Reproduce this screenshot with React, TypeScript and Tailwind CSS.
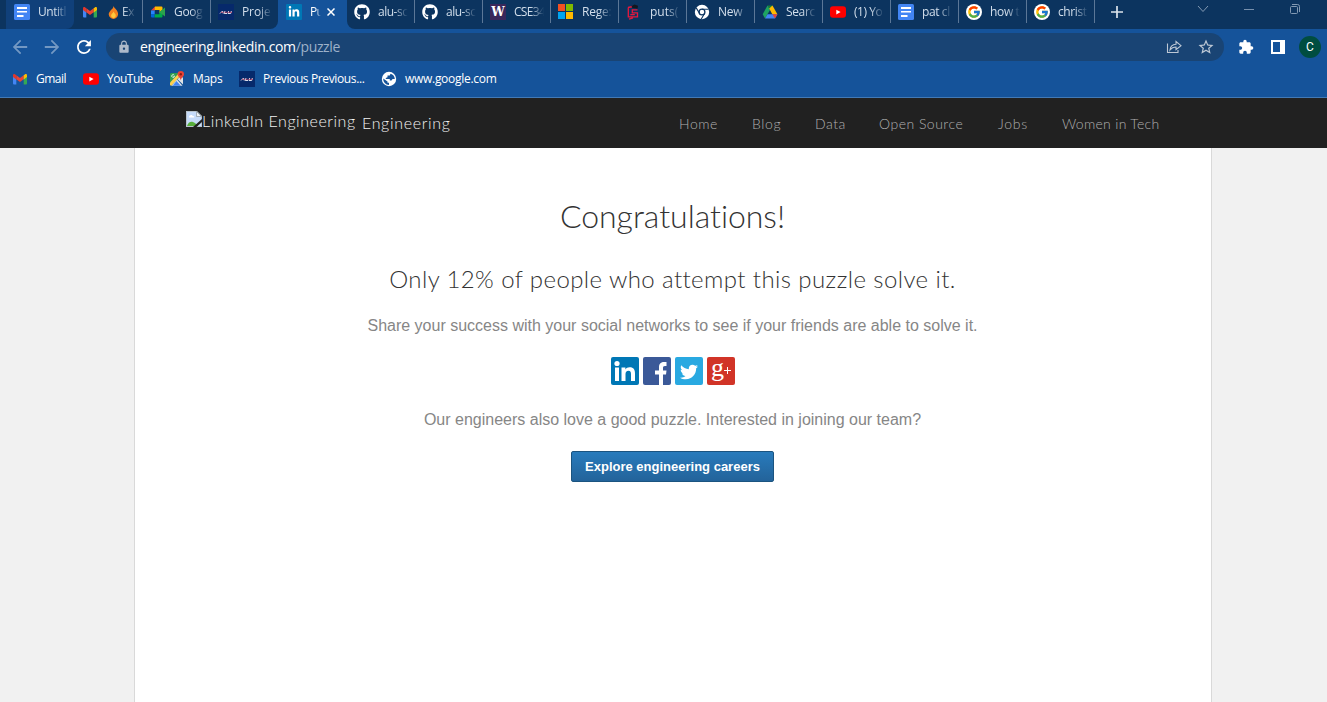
import React from "react";
import { FcGoogle } from "react-icons/fc";
import { FaGithub, FaTwitter, FaLinkedinIn } from "react-icons/fa";
import { MdArrowBack, MdArrowForward, MdRefresh, MdLock, MdStarOutline, MdExtension } from "react-icons/md";

const Docs = () => (
  <svg viewBox="0 0 16 16" className="size-4">
    <rect width="16" height="16" rx="1.5" fill="#4285f4" />
    <path d="M3 3h10v2H3zM3 7h10v1.500H3zM3 11h6.500v2H3z" fill="#fff" />
  </svg>
);

const Gmail = () => (
  <svg viewBox="0 0 16 16" className="size-4">
    <path d="M1 4.5 4.3 7v6.5H2a1 1 0 0 1-1-1z" fill="#4285f4" />
    <path d="M15 4.5 11.700 7v6.500H14a1 1 0 0 0 1-1z" fill="#34a853" />
    <path d="M4.300 4.300 8 7.100l3.700-2.800v4L8 11 4.300 8.300z" fill="#ea4335" />
    <path d="M11.700 4.300 12.800 3.400C13.800 2.600 15 3.200 15 4.400V6l-3.300 2.400z" fill="#fbbc04" />
    <path d="M4.300 4.300 3.200 3.400C2.200 2.600 1 3.200 1 4.400V6l3.300 2.400z" fill="#e0372c" />
  </svg>
);

const Meet = () => (
  <svg viewBox="0 0 16 16" className="size-4">
    <path d="M5 2.500 1 6.500h4z" fill="#ea4335" />
    <path d="M1 6.500h3.700v4H1z" fill="#2684fc" />
    <path d="M1 10.300h3.700v3.200H2a1 1 0 0 1-1-1z" fill="#0066da" />
    <path d="M5 2.500h6.500a1 1 0 0 1 1 1V8l-3 1V6H4.700z" fill="#ffba00" />
    <path d="M4.700 10.200h4.600V8l3.200-2.500v7a1 1 0 0 1-1 1H4.700z" fill="#00ac47" />
    <path d="M9.300 8.200 15 3.500v9z" fill="#2ba24c" />
  </svg>
);

const Alu = () => (
  <svg viewBox="0 0 16 16" className="size-4">
    <rect width="16" height="16" fill="#06296b" />
    <path d="M2 9.500 4.500 7l.7 2.500M7 7 6.200 9.500H9M10.600 7l-.6 2.500h2.700L13.400 7" fill="none" stroke="#dedeea" strokeWidth="1" />
    <path d="M3 8.300h2.500M6.500 8.300h3M10 8.300h4" stroke="#d3385c" strokeWidth=".7" />
  </svg>
);

const LinkedInMark = () => (
  <span className="flex size-4 items-center justify-center rounded-[1px] bg-[#0077b5]">
    <FaLinkedinIn className="size-3 text-white" />
  </span>
);

const YouTube = () => (
  <svg viewBox="0 0 16 16" className="size-4">
    <rect y="2.300" width="16" height="11.500" rx="3" fill="#f00" />
    <path d="m6.300 5.700 4.300 2.400-4.300 2.400z" fill="#fff" />
  </svg>
);

const Maps = () => (
  <svg viewBox="0 0 16 16" className="size-4">
    <path d="M1 3.500A1.500 1.500 0 0 1 2.500 2H10L1 11.500z" fill="#2e9d50" />
    <path d="M1 11.500 10 2l2 2-9.500 10.700A1.500 1.500 0 0 1 1 13.200z" fill="#ffd04b" />
    <path d="M2.500 14.700 8 8.500l5.500 6.200z" fill="#e4e8ea" />
    <path d="M3.500 14.700 7.500 10l4.300 4.700z" fill="#4285f4" />
    <path d="M8.500 8.300 11 5.800l3 .7v7z" fill="#dfe3e5" />
    <path d="M5.300 4.200a1.400 1.400 0 1 0 .2 1.100H4.300" stroke="#fff" fill="none" strokeWidth=".8" />
    <path d="M11.800 0a3.200 3.200 0 0 1 3.200 3.300c0 2.200-2.500 3-3.200 6-.7-3-3.200-3.800-3.200-6A3.200 3.200 0 0 1 11.800 0z" fill="#ea4335" />
    <circle cx="11.800" cy="3.200" r="1.200" fill="#8b1a14" />
  </svg>
);

const Washington = () => (
  <span className="flex size-4 items-center justify-center bg-[#39275b] font-['DejaVu_Serif',serif] text-[12px] leading-none font-bold text-white">W</span>
);

const Microsoft = () => (
  <svg viewBox="0 0 16 16" className="size-4">
    <path d="M0 0h7v7H0z" fill="#f25022" />
    <path d="M8 0h7v7H8z" fill="#7fba00" />
    <path d="M0 8h7v7H0z" fill="#00a4ef" />
    <path d="M8 8h7v7H8z" fill="#ffb900" />
  </svg>
);

const RubyBook = () => (
  <svg viewBox="0 0 16 16" className="size-4">
    <path d="M2 3.500 7 2.500M2.300 3.500v9.300h9.200V8.800H6.300V5.800h5.200M4.300 10.700h4.500M3 15.200l4-1.300" fill="none" stroke="#e8183f" strokeWidth="1.300" />
    <path d="M5.500 2 8.500.5l3.500 1.300-.5 3-2.200-.5-3-.3z" fill="#14161f" />
  </svg>
);

const Chrome = () => (
  <svg viewBox="0 0 16 16" className="size-4">
    <circle cx="8" cy="8" r="7.200" fill="#fff" />
    <circle cx="8" cy="8" r="2.900" fill="none" stroke="#0c345f" strokeWidth="1.300" />
    <path d="M8 5.200h6.600M5.600 9.500 2.200 3.900M10.500 9.400 7.300 15" stroke="#0c345f" strokeWidth="1.100" />
  </svg>
);

const Drive = () => (
  <svg viewBox="0 0 16 16" className="size-4">
    <path d="M5.500 1.500h5L8 6z" fill="#188038" />
    <path d="M5.500 1.500 8 6l-5 8.500L.7 10.200z" fill="#1ea362" />
    <path d="M10.500 1.500 15.400 10.200H10.300L7.200 4.600z" fill="#ffba00" />
    <path d="M5.500 10.200h9.900L13 14.500H3z" fill="#4285f4" />
    <path d="m15.400 10.200-2.400 4.300-2.600-4.300z" fill="#ea4335" />
  </svg>
);

const Google = () => (
  <span className="flex size-4 items-center justify-center rounded-full bg-white">
    <FcGoogle className="size-[14px]" />
  </span>
);

const Globe = () => (
  <svg viewBox="0 0 16 16" className="size-4">
    <circle cx="8" cy="8" r="7.200" fill="#fff" />
    <path d="M9.500 2.800 8.800 4.500H6.500v1.700L4.800 7v1h4v1.500h1.700l1-1.500h2.300A6 6 0 0 0 9.500 2.800z" fill="#15539a" />
    <path d="M2.200 7.500l4.300 3v1.300H8v2.200A6 6 0 0 1 2.200 7.500z" fill="#15539a" />
  </svg>
);

const Github = () => <FaGithub className="size-4 text-white" />;

const Fire = () => (
  <svg viewBox="0 0 12 14" className="h-[13px] w-[11px] shrink-0">
    <path d="M6 0C7 3 11.500 5 11 9.300 10.700 12 8.700 14 6 14S1 12 .8 9.300C.7 7 2 6 3 4.500 4.500 3.500 6 2 6 0z" fill="#f4811f" />
    <path d="M6 6c.6 1.700 2.500 2.300 2.500 4.400C8.500 12 7.400 13 6 13s-2.600-1-2.600-2.600C3.400 8.600 5.500 8 6 6z" fill="#ffc83d" />
  </svg>
);

type Tab = { icon: () => React.ReactElement; text: string; sep?: boolean; fire?: boolean; first?: boolean; track?: string };

const tabs: Tab[] = [
  { icon: Docs, text: "Untitl", first: true, track: "tracking-[-0.45px]" },
  { icon: Gmail, text: "Ex", fire: true, track: "tracking-[-0.5px]" },
  { icon: Meet, text: "Goog", sep: true, track: "tracking-[-0.3px]" },
  { icon: Alu, text: "Proje", sep: true, track: "tracking-[-0.1px]" },
];

const rightTabs: Tab[] = [
  { icon: Github, text: "alu-sc", track: "tracking-[-0.5px]" },
  { icon: Github, text: "alu-sc", sep: true, track: "tracking-[-0.5px]" },
  { icon: Washington, text: "CSE34", sep: true, track: "tracking-[-0.7px]" },
  { icon: Microsoft, text: "Rege:", sep: true, track: "tracking-[-0.2px]" },
  { icon: RubyBook, text: "puts(", sep: true, track: "tracking-[0px]" },
  { icon: Chrome, text: "New", sep: true, track: "tracking-[-0.2px]" },
  { icon: Drive, text: "Searc", sep: true, track: "tracking-[-0.35px]" },
  { icon: YouTube, text: "(1) Yo", sep: true, track: "tracking-[-0.45px]" },
  { icon: Docs, text: "pat cl", sep: true, track: "tracking-[-0.4px]" },
  { icon: Google, text: "how t", sep: true, track: "tracking-[-0.35px]" },
  { icon: Google, text: "christ", sep: true, track: "tracking-[-0.4px]" },
];

function BrowserTab({ tab }: { tab: Tab }) {
  const Icon = tab.icon;
  return (
    <div className={`flex h-full w-[68px] shrink-0 items-start pt-1 ${tab.first ? "rounded-br-lg bg-[#10407a]" : ""}`}>
      <span className={`-mt-1 h-[23px] w-px shrink-0 ${tab.sep ? "bg-[#5b7797]" : ""}`} />
      <span className="ml-[7px] size-4 shrink-0"><Icon /></span>
      <span className={`flex items-center gap-[3px] [mask-image:linear-gradient(to_right,#000_55%,transparent)] ${tab.fire ? "ml-[10px] w-[28px]" : "ml-2 w-[30px]"}`}>
        {tab.fire && <Fire />}
        <span className={`text-xs leading-4 whitespace-nowrap text-[#d3dfec] ${tab.track}`}>{tab.text}</span>
      </span>
    </div>
  );
}

const bookmarks = [
  { icon: Gmail, text: "Gmail", cls: "w-[71px]", track: "tracking-[-0.5px]" },
  { icon: YouTube, text: "YouTube", cls: "w-[86px]", track: "tracking-[-0.5px]" },
  { icon: Maps, text: "Maps", cls: "w-[70px]", track: "tracking-[-0.3px]" },
  { icon: Alu, text: "Previous Previous...", cls: "w-[142px]", track: "tracking-[-0.37px]" },
];

const links = [
  { t: "Home", c: "w-[73px]", k: "tracking-[0.55px]" },
  { t: "Blog", c: "w-[63px]", k: "tracking-[0.65px]" },
  { t: "Data", c: "w-[64px]", k: "tracking-[0.5px]" },
  { t: "Open Source", c: "w-[119px]", k: "tracking-[0.5px]" },
  { t: "Jobs", c: "w-[64px]", k: "tracking-[0.7px]" },
  { t: "Women in Tech", c: "w-[99px]", k: "tracking-[0.3px]" },
];

function Browser() {
  return (
    <header className="h-[98px] shrink-0 border-b border-[#4279b5] bg-[#15539a] font-['Open_Sans','Noto_Sans',sans-serif]">
      <div className="flex h-[29px] bg-[#15539a]">
        <div className="flex w-[278px] shrink-0 rounded-br-lg bg-[#0c345f] pl-[6px]">
          {tabs.map((t) => <BrowserTab key={t.text} tab={t} />)}
        </div>
        <div className="flex w-[69px] shrink-0 items-start bg-[#15539a] pt-1 pl-2">
          <LinkedInMark />
          <span className="ml-2 w-[11px] text-xs leading-4 tracking-[-0.7px] text-white [mask-image:linear-gradient(to_right,#000_55%,transparent)]">Pu</span>
          <svg viewBox="0 0 8 8" className="mt-1 ml-[6px] size-2"><path d="m.5.5 7 7m0-7-7 7" stroke="#fff" strokeWidth="1.500" /></svg>
        </div>
        <div className="flex flex-1 rounded-bl-lg bg-[#0c345f]">
          <div className="-ml-px flex">
            {rightTabs.map((t, i) => <BrowserTab key={i} tab={t} />)}
          </div>
          <span className="h-[23px] w-px bg-[#5b7797]" />
          <svg viewBox="0 0 12 12" className="mt-[6px] ml-4 size-3"><path d="M6 0v12M0 6h12" stroke="#dbe3ec" strokeWidth="1.700" /></svg>
          <svg viewBox="0 0 12 8" className="mt-[5px] ml-[74px] h-2 w-3"><path d="m1 1 5 5.500L11 1" fill="none" stroke="#8299b3" /></svg>
          <span className="mt-[9px] ml-[35px] h-px w-[10px] bg-[#7890ad]" />
          <svg viewBox="0 0 12 12" className="mt-[3px] ml-[35px] size-3">
            <rect x="1.500" y="3.500" width="7" height="7" rx="1" fill="none" stroke="#8299b3" />
            <path d="M3 1.500h5.500a2 2 0 0 1 2 2V9" fill="none" stroke="#8299b3" />
          </svg>
        </div>
      </div>
      <div className="flex h-9 items-center pl-3">
        <MdArrowBack className="mr-4 size-4 scale-[1.35] text-[#7398c3]" />
        <MdArrowForward className="mr-4 size-4 scale-[1.35] text-[#7398c3]" />
        <MdRefresh className="mr-[14px] size-4 scale-[1.3] text-white" />
        <div className="flex h-7 w-[1118px] items-center rounded-full bg-[#194474] pl-[11px]">
          <MdLock className="size-[14px] text-[#aebaca]" />
          <span className="ml-[9px] w-[205px] text-[14px] leading-5 tracking-[-0.36px] whitespace-nowrap text-white">
            engineering.linkedin.com<span className="text-[#9db1c9]">/puzzle</span>
          </span>
          <svg viewBox="0 0 16 16" className="ml-[821px] size-4">
            <path d="M1.500 4.500v9h10.500v-2.500M4 11c.4-4 2.700-5.600 6-5.700V2.500L15 6.700l-5 4V8C7.400 8 5.500 9 4 11z" fill="none" stroke="#bdc8d5" strokeWidth="1.100" />
          </svg>
          <MdStarOutline className="ml-[15px] size-[18px] text-[#bdc8d5]" />
        </div>
        <MdExtension className="ml-[14px] size-4 text-white" />
        <svg viewBox="0 0 14 14" className="ml-[17px] size-[14px]"><path d="M1 1h12v12H1z" fill="none" stroke="#fff" strokeWidth="2" /><path d="M9 0h5v14H9z" fill="#fff" /></svg>
        <span className="ml-[14px] flex size-[22px] items-center justify-center rounded-full bg-[#004d40] font-[Roboto,sans-serif] text-xs text-white">C</span>
      </div>
      <nav className="flex h-7 items-center pl-3">
        {bookmarks.map(({ icon: Icon, text, cls, track }) => (
          <span key={text} className={`flex shrink-0 items-center gap-2 ${cls}`}>
            <Icon />
            <span className={`text-xs whitespace-nowrap text-white ${track}`}>{text}</span>
          </span>
        ))}
        <Globe />
        <span className="ml-2 text-xs tracking-[-0.29px] text-white">www.google.com</span>
      </nav>
    </header>
  );
}

const BrokenImage = () => (
  <svg viewBox="0 0 16 16" className="size-4">
    <path d="M0 0h11l5 5v11H0z" fill="#b8c3cc" />
    <path d="M1 1h9.500v4.500H15V15H1z" fill="#c6dbfa" />
    <path d="M3 6c0-2 3-3 3.700-1 1.500-.4 2 1 1.300 1.500H3z" fill="#fff" />
    <path d="M1 15c1-4 4-5 6-4s4 2 5 4z" fill="#58ae3c" />
    <path d="M10.500.5v5H15.500z" fill="#eef1f4" stroke="#8d98a2" strokeWidth=".7" />
    <path d="M7 16 16 8v3l-5.500 5z" fill="#212121" />
  </svg>
);

const social = "flex size-7 items-center justify-center rounded-[2px]";

export default function App() {
  return (
    <div className="flex h-[702px] w-[1327px] flex-col overflow-hidden bg-[#f1f1f1] [font-variant-ligatures:none]">
      <Browser />
      <div className="flex h-[50px] shrink-0 bg-[#212121] pl-[186px] font-[Lato,sans-serif]">
        <div className="flex w-[493px] items-start">
          <span className="mt-[13px]"><BrokenImage /></span>
          <span className="mt-[11px] w-[160px] text-base leading-6 font-light tracking-[0.53px] whitespace-nowrap text-[#f2f2f2]">LinkedIn Engineering</span>
          <span className="mt-[13px] text-base leading-6 font-light tracking-[0.66px] text-[#f2f2f2]">Engineering</span>
        </div>
        <nav className="flex items-center pt-px text-[14px] font-light text-[#b0b0b0]">
          {links.map((l) => <a key={l.t} className={`${l.c} ${l.k} whitespace-nowrap`}>{l.t}</a>)}
        </nav>
      </div>
      <main className="ml-[134px] flex w-[1078px] flex-1 flex-col items-center border-x border-[#d9d9d9] bg-white pr-px">
        <h1 className="mt-[48px] font-[Lato,sans-serif] text-[32px] leading-10 font-light tracking-[-0.03px] text-[#333]">Congratulations!</h1>
        <h2 className="mt-[27px] font-[Lato,sans-serif] text-[24px] leading-8 font-light tracking-[0.41px] text-[#333]">Only 12% of people who attempt this puzzle solve it.</h2>
        <p className="mt-[19px] font-['Liberation_Sans',sans-serif] text-base leading-6 text-[#868686]">Share your success with your social networks to see if your friends are able to solve it.</p>
        <div className="mt-[19px] ml-px flex gap-1">
          <span className={`${social} bg-[#0077b5]`}>
            <svg viewBox="0 0 28 28" className="size-7"><circle cx="6" cy="6.500" r="2.600" fill="#fff" /><path d="M4 10.500h4V24H4zM10.500 10.500h3.900v1.900c.8-1.400 2.200-2.200 4.200-2.200 4.200 0 5.400 2.600 5.400 6.500V24h-4v-6.700c0-2-.4-3.500-2.500-3.500s-3 1.500-3 3.500V24h-4z" fill="#fff" /></svg>
          </span>
          <span className={`${social} bg-[#3b5998]`}>
            <svg viewBox="0 0 28 28" className="size-7"><path d="M16 28V17.500h-4v-4h4v-3.300C16 6.600 18.200 5 21 5h2.500v4H22c-1.600 0-2 .7-2 2v2.500h3.500l-.5 4h-3V28z" fill="#fff" /></svg>
          </span>
          <span className={`${social} bg-[#29a9e1]`}><FaTwitter className="mt-px size-[18px] text-white" /></span>
          <span className={`${social} bg-[#d13427] text-white`}>
            <span className="-mt-1.5 h-[22px] font-['Liberation_Serif',serif] text-[26px] leading-[22px]">g</span>
            <svg viewBox="0 0 7 7" className="-mt-px size-[7px]"><path d="M3.500 0v7M0 3.500h7" stroke="#fff" /></svg>
          </span>
        </div>
        <p className="mt-[23px] font-['Liberation_Sans',sans-serif] text-base leading-6 text-[#868686]">Our engineers also love a good puzzle. Interested in joining our team?</p>
        <button className="mt-[19px] h-[31px] w-[203px] rounded-[2px] border border-[#1b5480] bg-linear-to-b from-[#287bbc] to-[#23639a] font-['Liberation_Sans',sans-serif] text-[13px] font-bold whitespace-nowrap text-white">Explore engineering careers</button>
      </main>
    </div>
  );
}
